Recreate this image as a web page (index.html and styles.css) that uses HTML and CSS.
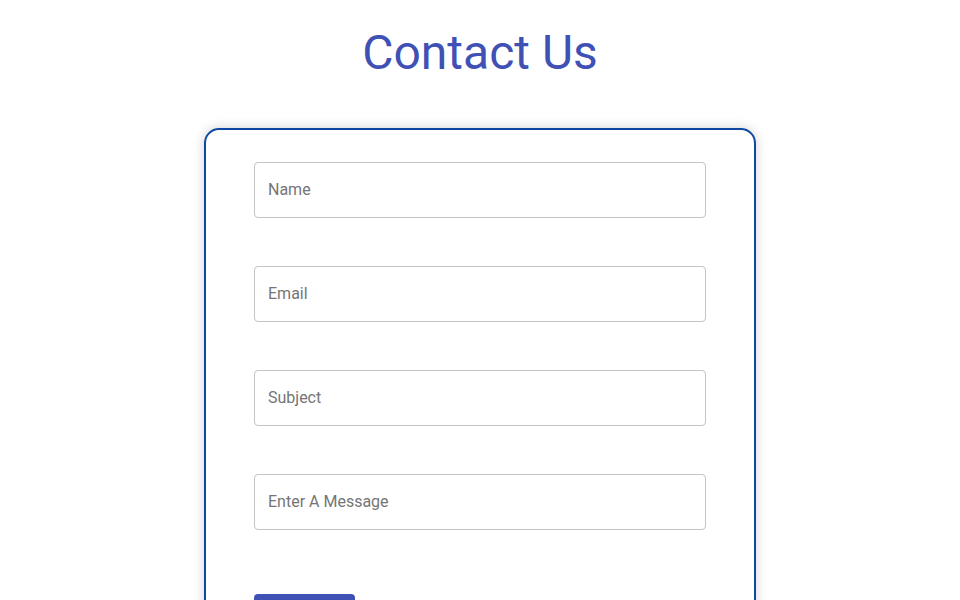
FILE: index.html
```html
<!DOCTYPE html>
<html lang="en">
<head>
	<meta charset="UTF-8">
	<title>Contact Us</title>
	<link rel="stylesheet" href="styles.css">
</head>
<body>
	<div class="page">
		<h1 class="title">Contact Us</h1>
		<form class="card">
			<input class="field" type="text" placeholder="Name">
			<input class="field" type="email" placeholder="Email">
			<input class="field" type="text" placeholder="Subject">
			<input class="field" type="text" placeholder="Enter A Message">
			<button class="submit" type="button">Submit</button>
		</form>
	</div>
</body>
</html>
```

FILE: styles.css
```css
body{
	margin:0;
	font-family:Roboto, "Liberation Sans", sans-serif;
	background-color:#fff;
}
.page{
	padding-top:25px;
	display:flex;
	flex-direction:column;
	align-items:center;
}
.title{
	margin:0 0 47px;
	font-size:48px;
	line-height:56px;
	font-weight:400;
	color:#3f51b5;
}
.card{
	box-sizing:border-box;
	width:552px;
	padding:32px 48px 40px;
	border:2px solid #0d47a1;
	border-radius:15px;
	box-shadow:0 0 12px rgba(0,0,0,0.18);
	display:flex;
	flex-direction:column;
	gap:48px;
}
.field{
	box-sizing:border-box;
	height:56px;
	padding:0 13px 2px;
	border:1px solid #c4c4c4;
	border-radius:4px;
	font-family:inherit;
	font-size:16px;
	color:#333;
	outline:none;
}
.field::placeholder{
	color:#757575;
}
.submit{
	align-self:flex-start;
	margin-top:16px;
	width:101px;
	height:40px;
	border:none;
	border-radius:4px;
	background-color:#3f51b5;
	color:#fff;
	font-family:inherit;
	font-size:15px;
	font-weight:500;
	text-transform:uppercase;
}
```
